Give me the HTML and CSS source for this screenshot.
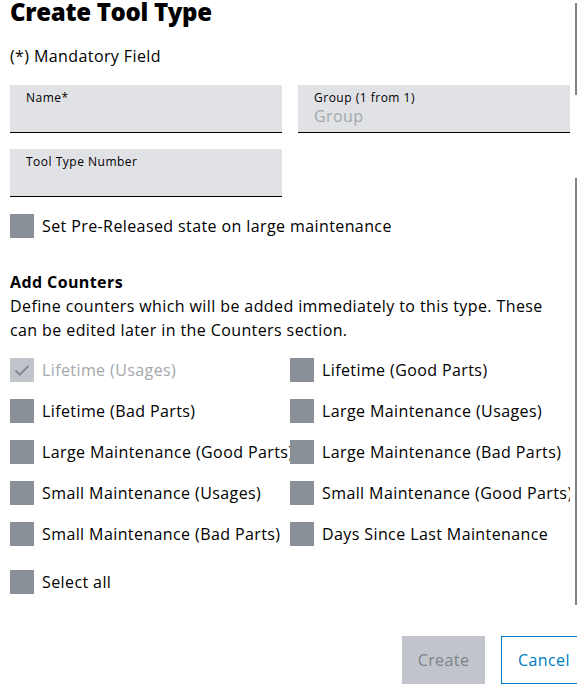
FILE: index.html
```html
<!DOCTYPE html>
<html lang="en">
<head>
<meta charset="utf-8">
<title>Create Tool Type</title>
<link rel="stylesheet" href="styles.css">
</head>
<body>
<div class="dialog">
  <h1 class="title">Create Tool Type</h1>
  <p class="mandatory">(*) Mandatory Field</p>

  <div class="fields">
    <div class="field">
      <span class="field-label">Name*</span>
    </div>
    <div class="field">
      <span class="field-label">Group (1 from 1)</span>
      <span class="field-placeholder">Group</span>
    </div>
    <div class="field">
      <span class="field-label">Tool Type Number</span>
    </div>
  </div>

  <label class="check prerelease">
    <span class="box"></span>
    <span class="check-text">Set Pre-Released state on large maintenance</span>
  </label>

  <h2 class="section-title">Add Counters</h2>
  <p class="section-desc">Define counters which will be added immediately to this type. These can be edited later in the Counters section.</p>

  <div class="counters">
    <label class="check disabled">
      <span class="box checked">
        <svg viewBox="0 0 24 24" width="24" height="24"><path d="M5.5 12.5l4.2 4.2 8.8-8.8" fill="none" stroke="#7d8389" stroke-width="1.8"/></svg>
      </span>
      <span class="check-text">Lifetime (Usages)</span>
    </label>
    <label class="check"><span class="box"></span><span class="check-text">Lifetime (Good Parts)</span></label>
    <label class="check"><span class="box"></span><span class="check-text">Lifetime (Bad Parts)</span></label>
    <label class="check"><span class="box"></span><span class="check-text">Large Maintenance (Usages)</span></label>
    <label class="check"><span class="box"></span><span class="check-text">Large Maintenance (Good Parts)</span></label>
    <label class="check"><span class="box"></span><span class="check-text">Large Maintenance (Bad Parts)</span></label>
    <label class="check"><span class="box"></span><span class="check-text">Small Maintenance (Usages)</span></label>
    <label class="check"><span class="box"></span><span class="check-text">Small Maintenance (Good Parts)</span></label>
    <label class="check"><span class="box"></span><span class="check-text">Small Maintenance (Bad Parts)</span></label>
    <label class="check"><span class="box"></span><span class="check-text">Days Since Last Maintenance</span></label>
  </div>

  <label class="check select-all">
    <span class="box"></span>
    <span class="check-text">Select all</span>
  </label>

  <div class="actions">
    <button class="btn btn-primary" disabled>Create</button>
    <button class="btn btn-secondary">Cancel</button>
  </div>
</div>
<div class="scroll-seg seg-top"></div>
<div class="scroll-seg seg-main"></div>
</body>
</html>
```

FILE: styles.css
```css
html, body {
  margin: 0;
  padding: 0;
  overflow: hidden;
  background: #ffffff;
}

body {
  font-family: "Open Sans", "Noto Sans", "DejaVu Sans", sans-serif;
  color: #000000;
  font-size: 16px;
  line-height: 24px;
  letter-spacing: 0.4px;
  width: 577px;
  height: 690px;
  position: relative;
}

.dialog {
  padding: 0 10px;
  width: 560px;
}

.title {
  margin: 0;
  font-size: 24px;
  line-height: 24px;
  font-weight: 800;
  letter-spacing: -0.3px;
}

.mandatory {
  margin: 20px 0 0;
}

.fields {
  margin-top: 17px;
  display: grid;
  grid-template-columns: 272px 272px;
  column-gap: 16px;
  row-gap: 16px;
}

.field {
  background: #e0e2e5;
  border-bottom: 1px solid #000000;
  padding: 6px 16px 0;
  box-sizing: content-box;
  height: 41px;
  display: flex;
  flex-direction: column;
}

.field-label {
  font-size: 12px;
  line-height: 14px;
  letter-spacing: 0.5px;
}

.field-placeholder {
  font-size: 16px;
  line-height: 22px;
  color: #a4a8ad;
}

.check {
  display: flex;
  align-items: center;
  height: 24px;
  gap: 8px;
  overflow: hidden;
  white-space: nowrap;
}

.box {
  flex: 0 0 24px;
  width: 24px;
  height: 24px;
  background: #8a9097;
  display: block;
}

.box.checked {
  background: #c1c5cb;
}

.box svg {
  display: block;
}

.disabled .check-text {
  color: #a4a8ad;
}

.prerelease {
  margin-top: 17px;
}

.section-title {
  margin: 32px 0 0;
  font-size: 16px;
  line-height: 24px;
  font-weight: 700;
}

.section-desc {
  margin: 0;
}

.counters {
  margin-top: 16px;
  display: grid;
  grid-template-columns: 280px 280px;
  row-gap: 17px;
}

.select-all {
  margin-top: 24px;
}

.actions {
  margin-top: 42px;
  margin-right: -17px;
  display: flex;
  justify-content: flex-end;
  gap: 16px;
}

.btn {
  height: 48px;
  width: 83px;
  padding: 0;
  font-family: inherit;
  font-size: 16px;
  letter-spacing: 0.4px;
  box-sizing: border-box;
}

.btn-primary {
  background: #c1c5cb;
  color: #7d8389;
  border: none;
}

.btn-secondary {
  width: 86px;
  text-align: left;
  padding-left: 16px;
  background: #ffffff;
  color: #007bc0;
  border: 1px solid #007bc0;
}

.scroll-seg {
  position: absolute;
  right: 0;
  width: 2px;
  background: #7d8389;
}

.seg-top {
  top: 3px;
  height: 92px;
}

.seg-main {
  top: 178px;
  height: 427px;
}
```
